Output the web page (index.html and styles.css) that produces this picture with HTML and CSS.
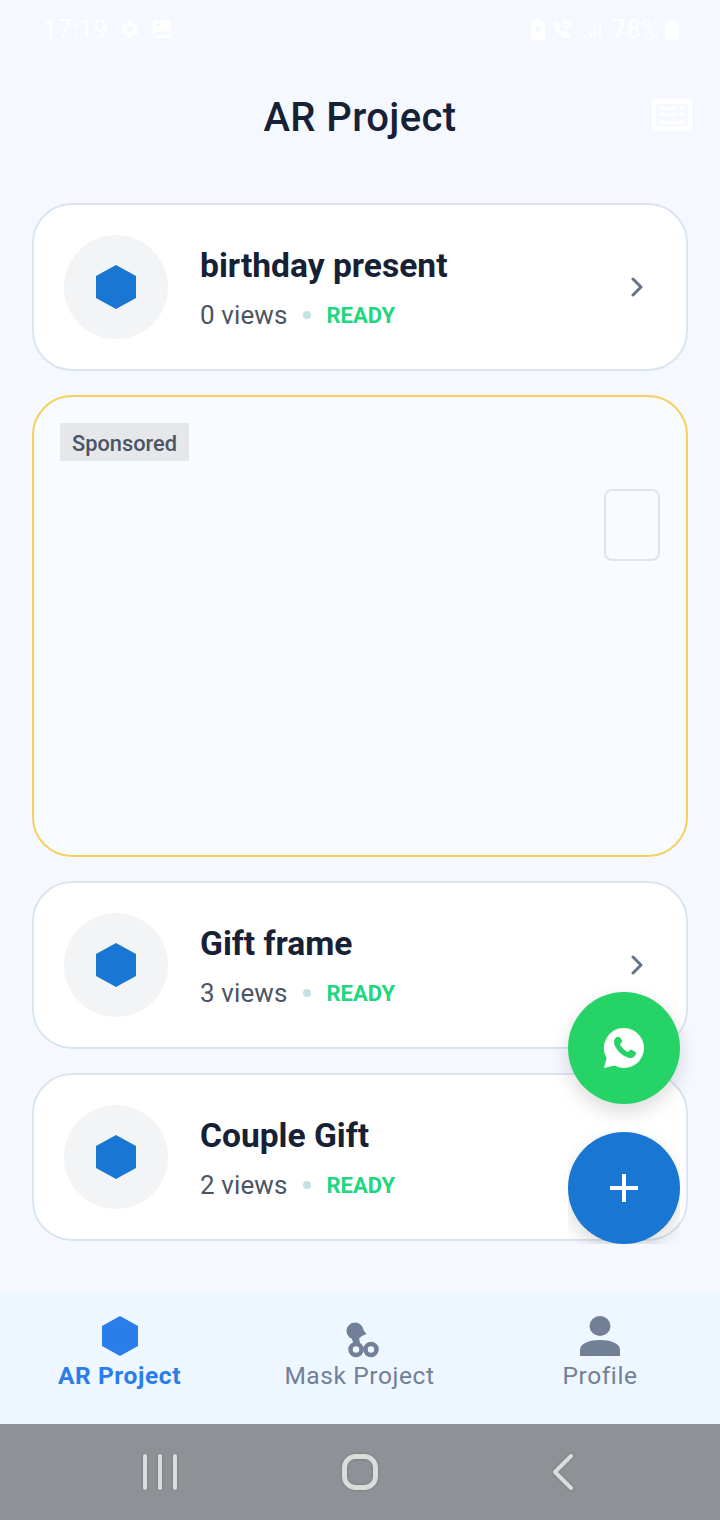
FILE: index.html
```html
<!DOCTYPE html>
<html lang="en">
<head>
  <meta charset="UTF-8">
  <meta name="viewport" content="width=device-width, initial-scale=1.0">
  <title>AR Project</title>
  <link rel="stylesheet" href="styles.css">
</head>
<body>
  <div class="screen">
    <div class="status-bar">
      <div class="status-side status-left">
        <span class="status-text">17:19</span>
        <svg class="status-icon" width="20" height="20" viewBox="3.400 2 20 20"><path d="M19.400 13a7.500 7.500 0 0 0 0-2l2.100-1.600-2-3.500-2.500 1a7.500 7.500 0 0 0-1.700-1L15.400 3.200h-4l-.4 2.700a7.500 7.500 0 0 0-1.700 1l-2.500-1-2 3.500L6.900 11a7.500 7.500 0 0 0 0 2l-2.100 1.600 2 3.500 2.500-1a7.500 7.500 0 0 0 1.700 1l.4 2.700h4l.4-2.700a7.500 7.500 0 0 0 1.700-1l2.500 1 2-3.500zM13.400 15.500a3.500 3.500 0 1 1 0-7 3.500 3.500 0 0 1 0 7z"/></svg>
        <svg class="status-icon" width="20" height="20" viewBox="0 0 22 22"><path fill-rule="evenodd" d="M3 1h16a2 2 0 0 1 2 2v16a2 2 0 0 1-2 2H3a2 2 0 0 1-2-2V3a2 2 0 0 1 2-2zm0 14v3h16v-3l-4-3-4 3-3-2zM7 5a2 2 0 1 0 0 4 2 2 0 0 0 0-4z"/></svg>
      </div>
      <div class="status-side status-right">
        <svg class="status-icon" width="16" height="22" viewBox="0 0 16 22"><path fill-rule="evenodd" d="M5 1h6v2h2a2 2 0 0 1 2 2v15a2 2 0 0 1-2 2H3a2 2 0 0 1-2-2V5a2 2 0 0 1 2-2h2zm3 7a3 3 0 1 0 0 6 3 3 0 0 0 0-6z"/></svg>
        <svg class="status-icon" width="24" height="22" viewBox="0 0 24 22"><path d="M2 5l4-2 3 5-2 2c1 2 3 4 5 5l2-2 5 3-2 4C9 20 2 13 2 5z"/><path d="M10 3c4-1 8 1 11 4l-2 2c-2-2-6-4-9-3zM11 8c2-1 5 0 7 2l-2 2c-1-1-3-2-5-1z"/></svg>
        <svg class="status-icon" width="20" height="20" viewBox="0 0 20 20"><path d="M1 16h3v3H1zM7 12h3v7H7zM12 7h2v12h-2zM17 2h2v17h-2z"/></svg>
        <span class="status-text">78%</span>
        <svg class="status-icon" width="14" height="22" viewBox="0 0 15 22"><path d="M5 1h5v2h3a2 2 0 0 1 2 2v15a2 2 0 0 1-2 2H2a2 2 0 0 1-2-2V5a2 2 0 0 1 2-2h3z"/></svg>
      </div>
    </div>

    <header class="app-header">
      <h1>AR Project</h1>
      <svg class="news-icon" width="40" height="32" viewBox="0 0 40 32"><path fill-rule="evenodd" d="M2 0h36a2 2 0 0 1 2 2v28a2 2 0 0 1-2 2H2a2 2 0 0 1-2-2V2a2 2 0 0 1 2-2zm2 5v22h32V5zm3 3h17v3H7zm20 0h6v3h-6zM7 14h17v3H7zm20 0h6v3h-6zM7 22h26v3H7z"/></svg>
    </header>

    <main class="content">
      <div class="card">
        <div class="avatar"><svg width="40" height="44" viewBox="0 0 40 44"><path d="M20 0l20 11v22L20 44 0 33V11z"/></svg></div>
        <div class="card-body">
          <div class="card-title">birthday present</div>
          <div class="card-meta"><span>0 views</span><i class="dot"></i><b>READY</b></div>
        </div>
        <svg class="chevron" width="14" height="20" viewBox="0 0 14 20"><path d="M3 2l8 8-8 8"/></svg>
      </div>

      <div class="ad-card">
        <span class="ad-label">Sponsored</span>
        <div class="ad-box"></div>
      </div>

      <div class="card">
        <div class="avatar"><svg width="40" height="44" viewBox="0 0 40 44"><path d="M20 0l20 11v22L20 44 0 33V11z"/></svg></div>
        <div class="card-body">
          <div class="card-title">Gift frame</div>
          <div class="card-meta"><span>3 views</span><i class="dot"></i><b>READY</b></div>
        </div>
        <svg class="chevron" width="14" height="20" viewBox="0 0 14 20"><path d="M3 2l8 8-8 8"/></svg>
      </div>

      <div class="card">
        <div class="avatar"><svg width="40" height="44" viewBox="0 0 40 44"><path d="M20 0l20 11v22L20 44 0 33V11z"/></svg></div>
        <div class="card-body">
          <div class="card-title">Couple Gift</div>
          <div class="card-meta"><span>2 views</span><i class="dot"></i><b>READY</b></div>
        </div>
      </div>
    </main>

    <div class="fab fab-green">
      <svg width="42" height="42" viewBox="0 0 42 42"><path fill-rule="evenodd" d="M21 1a20 20 0 1 1-9.500 37.600L1 41l2.600-10A20 20 0 0 1 21 1zm-7 9c-1 0-3 2-3 5 0 6 9 16 17 16 3 0 5-3 5-5 0-1-5-4-6-3l-2 2c-3-1-7-5-8-8l2-2c1-1-2-5-3-5z"/></svg>
    </div>
    <div class="fab fab-blue">
      <svg width="30" height="30" viewBox="0 0 30 30"><path d="M13 1h4v12h12v4H17v12h-4V17H1v-4h12z"/></svg>
    </div>

    <nav class="bottom-nav">
      <div class="nav-item active">
        <svg width="38" height="40" viewBox="0 0 38 40"><path d="M19 0l18 10v20L19 40 1 30V10z"/></svg>
        <span>AR Project</span>
      </div>
      <div class="nav-item">
        <svg class="mask-icon" width="38" height="40" viewBox="0 0 38 40">
          <circle cx="14" cy="15" r="8.500"/>
          <path d="M20 11l5.500 7-7 3zM10 21h8l1 7h-6z"/>
          <circle class="ring" cx="15" cy="33.500" r="5.500"/>
          <circle class="ring" cx="30" cy="33.500" r="5.500"/>
        </svg>
        <span>Mask Project</span>
      </div>
      <div class="nav-item">
        <svg width="42" height="40" viewBox="0 0 42 40"><ellipse cx="21" cy="10" rx="10.500" ry="10"/><path d="M1 40v-6c0-7 10-10 20-10s20 3 20 10v6z"/></svg>
        <span>Profile</span>
      </div>
    </nav>

    <div class="system-bar">
      <svg width="36" height="36" viewBox="0 0 36 36"><path d="M3 2v32M18 2v32M33 2v32"/></svg>
      <svg class="sys-home" width="36" height="36" viewBox="0 0 36 36"><rect x="2.500" y="2.500" width="31" height="31" rx="11"/></svg>
      <svg class="sys-back" width="24" height="36" viewBox="0 0 24 36"><path d="M20 2L4 18l16 16"/></svg>
    </div>
  </div>
</body>
</html>
```

FILE: styles.css
```css
* {
  box-sizing: border-box;
}
body {
  margin: 0;
  font-family: Roboto, "Liberation Sans", sans-serif;
  background-color: #f5f9ff;
}
.screen {
  position: relative;
  width: 720px;
  height: 1520px;
  display: flex;
  flex-direction: column;
  overflow: hidden;
}

/* barra de status */
.status-bar {
  height: 58px;
  padding: 0 41px 0 43px;
  display: flex;
  justify-content: space-between;
  align-items: center;
  color: #fff;
}
.status-side {
  display: flex;
  align-items: center;
}
.status-left {
  gap: 12px;
}
.status-right {
  gap: 6px;
}
.status-right .status-text {
  margin: 0 -1px 0 4px;
}
.status-text {
  font-size: 25px;
  letter-spacing: 0.5px;
}
.status-icon {
  fill: #fff;
}

/* cabecalho */
.app-header {
  height: 118px;
  display: flex;
  justify-content: center;
  align-items: center;
  position: relative;
}
.app-header h1 {
  margin: 1px 0 0;
  font-size: 40px;
  font-weight: 500;
  color: #172135;
  letter-spacing: 0.4px;
}
.news-icon {
  position: absolute;
  right: 28px;
  top: 41px;
  fill: #fff;
}

/* lista */
.content {
  flex: 1;
  padding: 27px 32px 0;
  display: flex;
  flex-direction: column;
  gap: 24px;
}
.card {
  height: 168px;
  padding: 0 42px 0 30px;
  display: flex;
  align-items: center;
  background-color: #fff;
  border: 2px solid #dbe5ef;
  border-radius: 40px;
}
.avatar {
  width: 104px;
  height: 104px;
  flex-shrink: 0;
  border-radius: 50%;
  background-color: #f3f4f6;
  display: flex;
  justify-content: center;
  align-items: center;
}
.avatar svg {
  fill: #1976d2;
}
.card-body {
  flex: 1;
  margin-left: 32px;
  padding-top: 4px;
}
.card-title {
  font-size: 33.600px;
  font-weight: 700;
  line-height: 42px;
  color: #172135;
}
.card-meta {
  margin-top: 10px;
  display: flex;
  align-items: center;
  font-size: 26px;
  line-height: 34px;
  color: #4b5563;
  letter-spacing: 0.1px;
}
.card-meta b {
  margin-top: 2px;
  font-size: 22px;
  font-weight: 700;
  color: #22d67e;
  letter-spacing: 0;
}
.dot {
  width: 8px;
  height: 8px;
  margin: 0 15px 0 16px;
  border-radius: 50%;
  background-color: #c3e2e4;
}
.chevron {
  fill: none;
  stroke: #64748b;
  stroke-width: 3;
  stroke-linecap: round;
  stroke-linejoin: round;
}
.ad-card {
  height: 462px;
  padding: 26px;
  background-color: #f8fbff;
  border: 2px solid #f5d060;
  border-radius: 40px;
  position: relative;
}
.ad-label {
  display: inline-block;
  padding: 0 12px;
  height: 38px;
  line-height: 42px;
  background-color: #e5e7eb;
  font-size: 21.800px;
  font-weight: 500;
  color: #4b5563;
}
.ad-box {
  position: absolute;
  right: 26px;
  top: 92px;
  width: 56px;
  height: 72px;
  border: 2px solid #e0e4e9;
  border-radius: 8px;
}

/* botoes flutuantes */
.fab {
  position: absolute;
  left: 568px;
  width: 112px;
  height: 112px;
  border-radius: 50%;
  display: flex;
  justify-content: center;
  align-items: center;
  fill: #fff;
}
.fab-green {
  top: 992px;
  background-color: #25d366;
  box-shadow: 0 8px 20px rgba(0, 0, 0, 0.14);
  z-index: 1;
}
.fab-blue {
  top: 1132px;
  background-color: #1976d2;
  box-shadow: 0 8px 20px rgba(0, 0, 0, 0.14);
  clip-path: inset(0);
}

/* navegacao */
.bottom-nav {
  height: 131px;
  padding: 23px 0 0;
  display: grid;
  grid-template-columns: 239px 241px 240px;
  background-color: #eef6ff;
}
.nav-item {
  display: flex;
  flex-direction: column;
  align-items: center;
  font-size: 24.500px;
  color: #718096;
  letter-spacing: 0.6px;
  fill: #718096;
}
.nav-item span {
  line-height: 30px;
  margin-top: 5px;
}
.nav-item.active {
  color: #2b7de9;
  fill: #2b7de9;
  font-weight: 700;
}
.mask-icon {
  overflow: visible;
}
.mask-icon .ring {
  fill: none;
  stroke: #718096;
  stroke-width: 4.500;
}
.system-bar {
  height: 96px;
  padding-left: 142px;
  display: flex;
  align-items: center;
  background-color: #8e9196;
}
.system-bar svg {
  fill: none;
  stroke: #dcdcdc;
  stroke-width: 4;
  stroke-linecap: round;
  stroke-linejoin: round;
  filter: drop-shadow(0 0 1px rgba(90, 90, 90, 0.7));
}
.system-bar .sys-home {
  margin-left: 164px;
  stroke-width: 5;
}
.system-bar .sys-back {
  margin-left: 173px;
}
```
